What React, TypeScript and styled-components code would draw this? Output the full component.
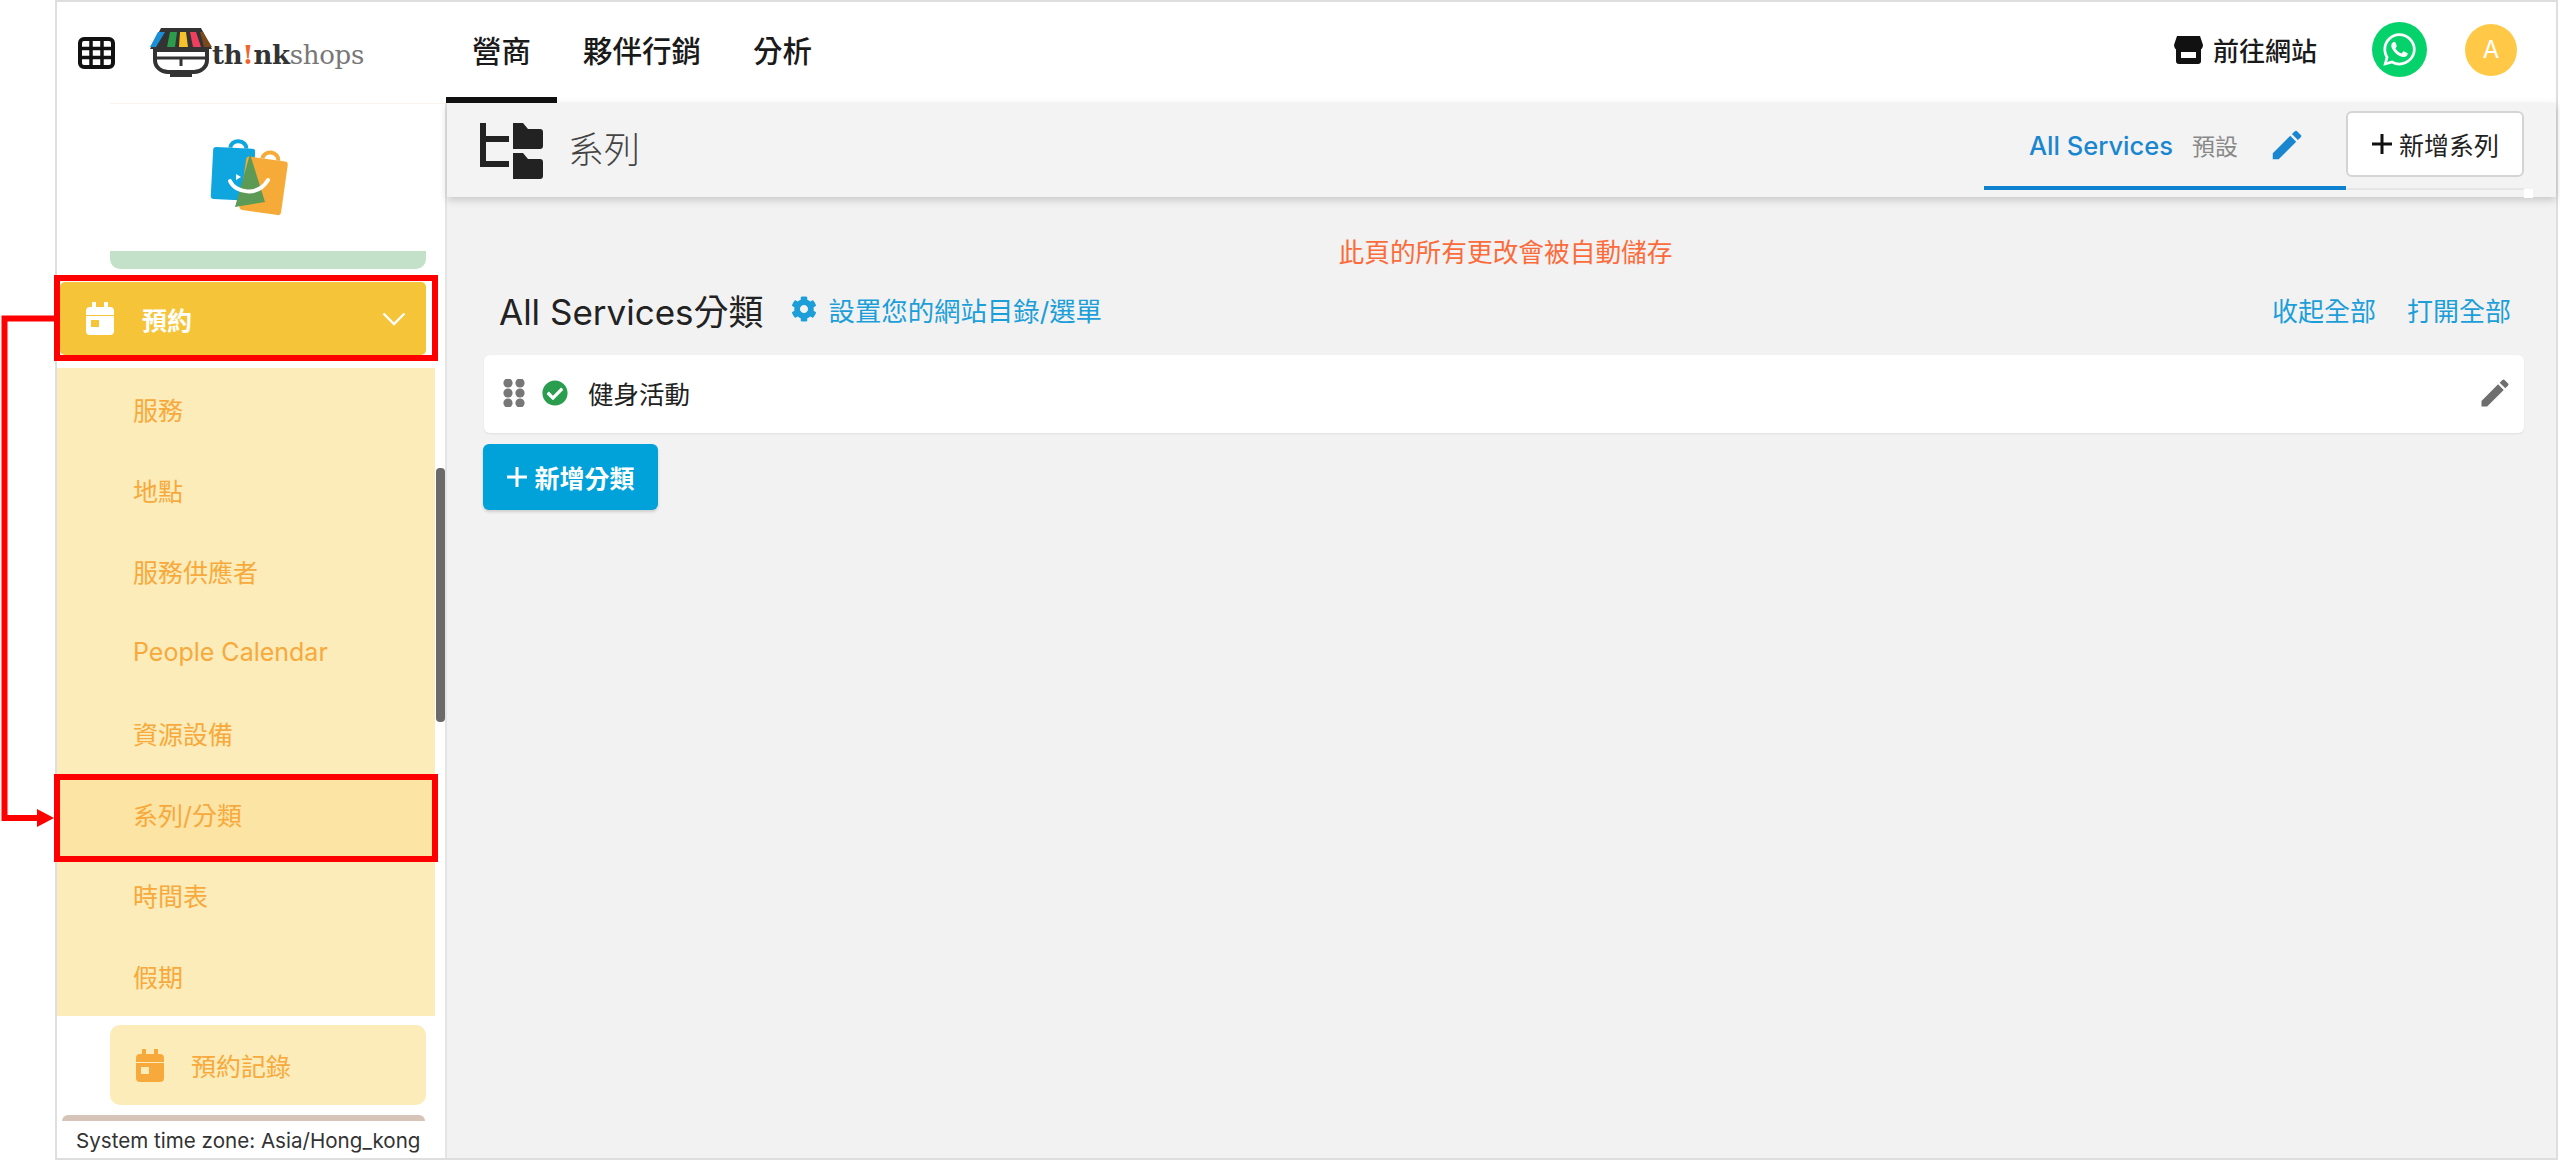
import React from 'react'
import styled, { createGlobalStyle } from 'styled-components'
import { FaWhatsapp, FaCog, FaCheckCircle } from 'react-icons/fa'
import { MdEdit } from 'react-icons/md'

const GlobalStyle = createGlobalStyle`
  html, body {
    margin: 0;
    background: #fff;
    font-family: Inter, "Noto Sans CJK TC", sans-serif;
  }
  * { box-sizing: border-box; }
`

const Page = styled.div`
  position: relative;
  width: 2560px;
  height: 1160px;
  padding-left: 55px;
  overflow: hidden;
`

const Frame = styled.div`
  width: 2503px;
  height: 1160px;
  display: flex;
  flex-direction: column;
  border: 2px solid #dedede;
`

const TopBar = styled.header`
  height: 101px;
  flex: none;
  display: flex;
  align-items: stretch;
  background: #fff;
`

const Brand = styled.div`
  width: 389px;
  flex: none;
  display: flex;
  align-items: center;
  padding-left: 21px;
`

const LogoMark = styled.svg`
  width: 76px;
  height: 52px;
  margin-left: 28px;
  flex: none;
`

const LogoText = styled.span`
  font-family: "DejaVu Serif", serif;
  font-size: 26px;
  font-weight: 700;
  color: #333;
  margin-left: -7px;
  margin-top: 4px;
  letter-spacing: -0.3px;
  b { color: #f0642d; }
  em { font-style: normal; font-weight: 400; color: #777; }
`

const Tabs = styled.nav`
  display: flex;
`

const Tab = styled.a<{ $active?: boolean }>`
  display: flex;
  align-items: center;
  padding: 0 26px 7px;
  min-width: 111px;
  justify-content: center;
  font-size: 29.5px;
  font-weight: 500;
  color: #1a1a1a;
  border-bottom: 6px solid ${p => (p.$active ? '#111' : 'transparent')};
  border-top: 6px solid transparent;
`

const TopRight = styled.div`
  margin-left: auto;
  display: flex;
  align-items: center;
  padding: 0 39px 6px 0;
`

const SiteLink = styled.a`
  display: flex;
  align-items: center;
  gap: 10px;
  font-size: 26px;
  font-weight: 500;
  color: #1a1a1a;
  margin-right: 55px;
`

const WhatsApp = styled.div`
  width: 55px;
  height: 55px;
  border-radius: 50%;
  background: #06d26c;
  color: #fff;
  display: flex;
  align-items: center;
  justify-content: center;
  margin-right: 38px;
`

const Avatar = styled.div`
  width: 52px;
  height: 52px;
  border-radius: 50%;
  background: #ffc947;
  color: #fff;
  display: flex;
  align-items: center;
  justify-content: center;
  font-size: 24px;
`

const Body = styled.div`
  flex: 1;
  min-height: 0;
  display: flex;
`

const Sidebar = styled.aside`
  position: relative;
  width: 390px;
  flex: none;
  display: flex;
  flex-direction: column;
  border-right: 2px solid #e4e4e4;
  background: #fff;
`

const LogoArea = styled.div`
  height: 148px;
  margin-left: 53px;
  border-top: 1px solid #fbf4ec;
  display: flex;
  justify-content: center;
  padding: 35px 54px 0 0;
`

const GreenStrip = styled.div`
  width: 316px;
  height: 18px;
  margin: 0 0 13px 53px;
  background: #c3e0c8;
  border-radius: 0 0 10px 10px;
`

const MenuHead = styled.div`
  position: relative;
  width: 366px;
  height: 73px;
  margin: 0 0 13px 3px;
  padding: 0 20px 0 26px;
  display: flex;
  align-items: center;
  background: #f6c438;
  border-radius: 5px;
  color: #fff;
  font-size: 25px;
  font-weight: 700;
`

const MenuHeadLabel = styled.span`
  margin-left: 28px;
  flex: 1;
`

const RedBox = styled.div`
  position: absolute;
  top: -7px;
  left: -6px;
  right: -12px;
  bottom: -6px;
  border: 6px solid #fe0000;
`

const SubPanel = styled.div`
  width: 378px;
  background: #fbecb9;
  margin-bottom: 9px;
`

const SubItem = styled.div`
  position: relative;
  height: 81px;
  padding: 0 0 0 76px;
  display: flex;
  align-items: center;
  color: #f8a93c;
  font-size: 25px;
  font-weight: 400;
`

const SubLabel = styled.span`
  position: relative;
`

const ActiveBox = styled.div`
  position: absolute;
  top: 1px;
  left: -3px;
  right: -3px;
  bottom: -8px;
  border: 6px solid #fe0000;
  background: #fce4a4;
`

const RecordTile = styled.div`
  width: 316px;
  height: 80px;
  margin: 0 0 10px 53px;
  padding-left: 26px;
  display: flex;
  align-items: center;
  gap: 27px;
  background: #fbecb9;
  border-radius: 10px;
  color: #f8a93c;
  font-size: 25px;
  font-weight: 400;
`

const BrownStrip = styled.div`
  width: 363px;
  height: 6px;
  margin-left: 5px;
  background: #d6c4b8;
  border-radius: 10px 10px 0 0;
`

const TimeZone = styled.div`
  padding: 6px 0 0 19px;
  font-size: 20.6px;
  line-height: 28px;
  color: #333;
  white-space: nowrap;
`

const ScrollThumb = styled.div`
  position: absolute;
  top: 365px;
  right: 0;
  width: 9px;
  height: 254px;
  background: #6a6a6a;
  border-radius: 4px;
`

const Main = styled.main`
  flex: 1;
  min-width: 0;
  display: flex;
  flex-direction: column;
  background: #f2f2f2;
`

const SubHeader = styled.div`
  position: relative;
  height: 94px;
  flex: none;
  display: flex;
  align-items: flex-start;
  padding: 0 32px 0 33px;
  background: #f3f3f3;
  box-shadow: 0 3px 8px rgba(0, 0, 0, 0.18);
`

const PageTitle = styled.div`
  display: flex;
  align-items: center;
  gap: 25px;
  height: 90px;
  font-size: 36px;
  font-weight: 300;
  color: #444;
`

const TitleIcon = styled.span`
  display: flex;
  margin-top: 6px;
`

const TitleText = styled.span`
  margin-top: -2px;
`

const ServiceTab = styled.div`
  margin-left: auto;
  width: 362px;
  height: 87px;
  padding: 1px 0 0 45px;
  display: flex;
  align-items: center;
  border-bottom: 4px solid #0f82cf;
`

const ServiceName = styled.span`
  font-size: 25.5px;
  font-weight: 500;
  color: #1a86d0;
`

const DefaultTag = styled.span`
  margin: 0 30px 0 19px;
  font-size: 23px;
  color: #888;
`

const AddSlot = styled.div`
  position: relative;
  height: 87px;
  padding-top: 8px;
  border-bottom: 2px solid #e6e6e6;
`

const AddSeries = styled.button`
  width: 178px;
  height: 66px;
  display: flex;
  align-items: center;
  justify-content: center;
  gap: 6px;
  padding: 0;
  background: #fff;
  border: 2px solid #d4d4d4;
  border-radius: 6px;
  font: inherit;
  font-size: 25px;
  color: #222;
`

const CornerDot = styled.div`
  position: absolute;
  right: -9px;
  bottom: -10px;
  width: 9px;
  height: 9px;
  background: #fff;
`

const Content = styled.div`
  flex: 1;
  padding: 39px 32px 0 37px;
`

const Notice = styled.div`
  text-align: center;
  font-size: 25.7px;
  line-height: 34px;
  color: #fb6b3b;
  margin-right: -3px;
`

const HeadingRow = styled.div`
  display: flex;
  align-items: center;
  height: 44px;
  margin: 17px 13px 24px 15px;
`

const Heading = styled.h2`
  margin: 0 27px 0 0;
  font-size: 35px;
  font-weight: 400;
  color: #222;
`

const SetupLink = styled.a`
  display: flex;
  align-items: center;
  gap: 12px;
  font-size: 26.4px;
  color: #1c9fd9;
`

const Actions = styled.div`
  margin-left: auto;
  display: flex;
  gap: 31px;
  font-size: 26px;
  color: #1c9fd9;
`

const CategoryRow = styled.div`
  height: 78px;
  display: flex;
  align-items: center;
  padding: 0 11px 3px 19px;
  background: #fff;
  border-radius: 6px;
  box-shadow: 0 1px 2px rgba(0, 0, 0, 0.08);
  font-size: 25.5px;
  color: #222;
`

const StatusIcon = styled(FaCheckCircle)`
  margin-left: 17px;
  color: #2a9d4f;
`

const CategoryName = styled.span`
  margin-left: 20px;
  flex: 1;
`

const AddCategory = styled.button`
  width: 175px;
  height: 66px;
  margin: 11px 0 0 -1px;
  display: flex;
  align-items: center;
  justify-content: center;
  gap: 6px;
  padding: 0;
  background: #00a2d9;
  border: 0;
  border-radius: 6px;
  box-shadow: 0 2px 3px rgba(0, 0, 0, 0.15);
  font: inherit;
  font-size: 25px;
  font-weight: 600;
  color: #fff;
`

const Connector = styled.svg`
  position: absolute;
  left: 0;
  top: 310px;
  width: 60px;
  height: 520px;
`

const GridIcon = () => (
  <svg width="37" height="32" viewBox="0 0 37 32">
    <rect x="2" y="2" width="33" height="28" rx="4" fill="none" stroke="#111" strokeWidth="4" />
    <path d="M13 2v28M24 2v28M2 11.5h33M2 20.5h33" stroke="#111" strokeWidth="3.5" />
  </svg>
)

const ShopMark = () => (
  <LogoMark viewBox="0 0 76 52">
    <path d="M18 1h40l11 21H7z" fill="#333" />
    <path d="M15 5h7l-9 15H7z" fill="#1b8fd6" />
    <path d="M27 5h7l-2 15h-8z" fill="#2c9b4b" />
    <path d="M37 5h6l2 15h-9z" fill="#f5c02c" />
    <path d="M47 5h6l5 15h-8z" fill="#ef3f5f" />
    <path d="M57 5h3l9 15h-8z" fill="#7a4a1c" />
    <path d="M12 23h52v10c0 7-6 12-13 12H25c-7 0-13-5-13-12z" fill="#fff" stroke="#333" strokeWidth="4" />
    <path d="M13 31h50M38 31v8" stroke="#333" strokeWidth="3" />
    <path d="M27 45h22v5H27z" fill="#333" />
  </LogoMark>
)

const BagsLogo = () => (
  <svg width="84" height="80" viewBox="0 0 84 80">
    <g transform="rotate(3 26 34)">
      <path d="M20 9a8 7 0 0 1 16 0" fill="none" stroke="#0fa5de" strokeWidth="4" />
      <rect x="3" y="9" width="42" height="52" rx="3" fill="#0fa5de" />
    </g>
    <g transform="rotate(8 56 44)">
      <path d="M50 20a8 7 0 0 1 16 0" fill="none" stroke="#f6ab38" strokeWidth="4" />
      <rect x="34" y="20" width="42" height="54" rx="3" fill="#f6ab38" />
    </g>
    <path d="M41 15l15 48-30 5z" fill="#5c9a55" />
    <path d="M21 42c5 12 28 16 38-1" fill="none" stroke="#fff" strokeWidth="4" strokeLinecap="round" />
    <path d="M32 38l-5-3v6z" fill="#fff" />
  </svg>
)

const CalendarIcon = ({ color, hole }: { color: string; hole: string }) => (
  <svg width="28" height="33" viewBox="0 0 28 33">
    <path d="M6 0h4v5h8V0h4v5h2a4 4 0 0 1 4 4v4H0V9a4 4 0 0 1 4-4h2z" fill={color} />
    <path d="M0 14h28v15a4 4 0 0 1-4 4H4a4 4 0 0 1-4-4z" fill={color} />
    <rect x="5" y="18" width="8" height="7" fill={hole} />
  </svg>
)

const Chevron = () => (
  <svg width="24" height="14" viewBox="0 0 24 14">
    <path d="M1.5 1.5L12 12 22.5 1.5" fill="none" stroke="#fff" strokeWidth="2.4" />
  </svg>
)

const StoreIcon = () => (
  <svg width="29" height="28" viewBox="0 0 29 28">
    <path d="M3 0h23l3 9c0 3-2 5-4 5H4c-2 0-4-2-4-5z" fill="#111" />
    <path d="M2 12h25v13a3 3 0 0 1-3 3H5a3 3 0 0 1-3-3z" fill="#111" />
    <path d="M7 16h15v6H7z" fill="#fff" />
  </svg>
)

const FolderTree = () => (
  <svg width="63" height="56" viewBox="0 0 63 56">
    <path d="M3 0v41h26" fill="none" stroke="#222" strokeWidth="6" />
    <path d="M3 16h26" fill="none" stroke="#222" strokeWidth="6" />
    <path d="M33 0h10l5 6h12a3 3 0 0 1 3 3v14a3 3 0 0 1-3 3H33z" fill="#222" />
    <path d="M33 30h10l5 6h12a3 3 0 0 1 3 3v14a3 3 0 0 1-3 3H33z" fill="#222" />
  </svg>
)

const DragDots = () => (
  <svg width="22" height="28" viewBox="0 0 22 28">
    {[4, 14, 24].map(y =>
      [5, 17].map(x => <circle key={`${x}-${y}`} cx={x} cy={y} r="4.6" fill="#777" />)
    )}
  </svg>
)

const PlusIcon = ({ color }: { color: string }) => (
  <svg width="22" height="22" viewBox="0 0 22 22">
    <path d="M11 1v20M1 11h20" stroke={color} strokeWidth="3" />
  </svg>
)

const subItems = ['服務', '地點', '服務供應者', 'People Calendar', '資源設備', '系列/分類', '時間表', '假期']

const App = () => (
  <Page>
    <GlobalStyle />
    <Frame>
      <TopBar>
        <Brand>
          <GridIcon />
          <ShopMark />
          <LogoText>th<b>!</b>nk<em>shops</em></LogoText>
        </Brand>
        <Tabs>
          <Tab $active>營商</Tab>
          <Tab>夥伴行銷</Tab>
          <Tab>分析</Tab>
        </Tabs>
        <TopRight>
          <SiteLink><StoreIcon />前往網站</SiteLink>
          <WhatsApp><FaWhatsapp size={37} /></WhatsApp>
          <Avatar>A</Avatar>
        </TopRight>
      </TopBar>
      <Body>
        <Sidebar>
          <LogoArea><BagsLogo /></LogoArea>
          <GreenStrip />
          <MenuHead>
            <CalendarIcon color="#fff" hole="#f6c438" />
            <MenuHeadLabel>預約</MenuHeadLabel>
            <Chevron />
            <RedBox />
          </MenuHead>
          <SubPanel>
            {subItems.map(item => (
              <SubItem key={item}>
                {item === '系列/分類' && <ActiveBox />}
                <SubLabel>{item}</SubLabel>
              </SubItem>
            ))}
          </SubPanel>
          <RecordTile>
            <CalendarIcon color="#f8a93c" hole="#fbecb9" />
            預約記錄
          </RecordTile>
          <BrownStrip />
          <TimeZone>System time zone: Asia/Hong_kong</TimeZone>
          <ScrollThumb />
        </Sidebar>
        <Main>
          <SubHeader>
            <PageTitle>
              <TitleIcon><FolderTree /></TitleIcon>
              <TitleText>系列</TitleText>
            </PageTitle>
            <ServiceTab>
              <ServiceName>All Services</ServiceName>
              <DefaultTag>預設</DefaultTag>
              <MdEdit size={38} color="#1a86d0" />
            </ServiceTab>
            <AddSlot>
              <AddSeries><PlusIcon color="#111" />新增系列</AddSeries>
              <CornerDot />
            </AddSlot>
          </SubHeader>
          <Content>
            <Notice>此頁的所有更改會被自動儲存</Notice>
            <HeadingRow>
              <Heading>All Services分類</Heading>
              <SetupLink><FaCog size={26} />設置您的網站目錄/選單</SetupLink>
              <Actions><span>收起全部</span><span>打開全部</span></Actions>
            </HeadingRow>
            <CategoryRow>
              <DragDots />
              <StatusIcon size={26} />
              <CategoryName>健身活動</CategoryName>
              <MdEdit size={36} color="#6e6e6e" />
            </CategoryRow>
            <AddCategory><PlusIcon color="#fff" />新增分類</AddCategory>
          </Content>
        </Main>
      </Body>
    </Frame>
    <Connector viewBox="0 0 60 520">
      <path d="M54 8.5H4.5V508H40" fill="none" stroke="#fe0000" strokeWidth="6" />
      <path d="M37 499l17 9-17 9z" fill="#fe0000" />
    </Connector>
  </Page>
)

export default App
